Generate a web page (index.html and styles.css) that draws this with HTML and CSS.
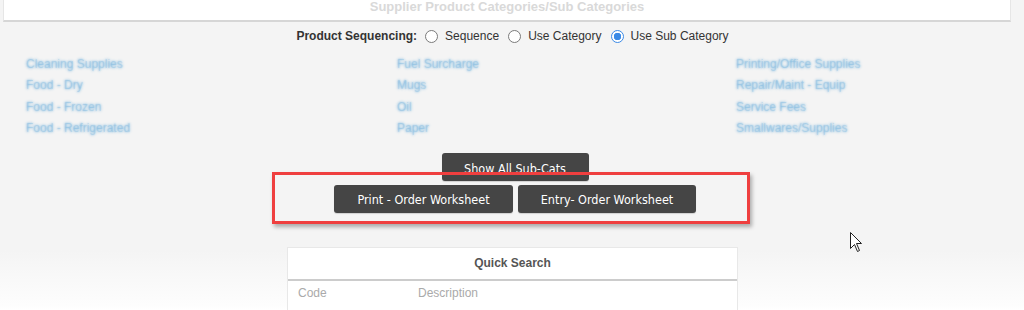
FILE: index.html
```html
<!DOCTYPE html>
<html>
<head>
<meta charset="utf-8">
<link rel="stylesheet" href="styles.css">
</head>
<body>
<div class="page">
  <div class="top-card">
    <div class="top-title">Supplier Product Categories/Sub Categories</div>
  </div>

  <div class="seq-row">
    <span class="seq-label">Product Sequencing:</span>
    <label class="radio"><span class="radio-dot"></span>Sequence</label>
    <label class="radio"><span class="radio-dot"></span>Use Category</label>
    <label class="radio"><span class="radio-dot checked"></span>Use Sub Category</label>
  </div>

  <div class="links">
    <div class="link-col">
      <a class="cat-link">Cleaning Supplies</a>
      <a class="cat-link">Food - Dry</a>
      <a class="cat-link">Food - Frozen</a>
      <a class="cat-link">Food - Refrigerated</a>
    </div>
    <div class="link-col">
      <a class="cat-link">Fuel Surcharge</a>
      <a class="cat-link">Mugs</a>
      <a class="cat-link">Oil</a>
      <a class="cat-link">Paper</a>
    </div>
    <div class="link-col">
      <a class="cat-link">Printing/Office Supplies</a>
      <a class="cat-link">Repair/Maint - Equip</a>
      <a class="cat-link">Service Fees</a>
      <a class="cat-link">Smallwares/Supplies</a>
    </div>
  </div>

  <div class="actions">
    <div class="btn-row">
      <button class="btn btn-show">Show All Sub-Cats</button>
    </div>
    <div class="btn-row btn-row-second">
      <button class="btn btn-print">Print - Order Worksheet</button>
      <button class="btn btn-entry">Entry- Order Worksheet</button>
    </div>
    <div class="highlight"></div>
  </div>

  <div class="quick-card">
    <div class="quick-head">Quick Search</div>
    <div class="quick-cols">
      <span class="col-code">Code</span>
      <span class="col-desc">Description</span>
    </div>
  </div>

  <svg class="cursor" width="13" height="21" viewBox="0 0 13 21">
    <path d="M0.5 0.5 L0.5 16.5 L4.5 12.5 L7.5 19.5 L9.5 18.5 L6.5 11.5 L11.5 11.5 Z" fill="#fff" stroke="#222" stroke-width="1"/>
  </svg>
</div>
</body>
</html>
```

FILE: styles.css
```css
html, body {
  margin: 0;
  padding: 0;
}

body {
  width: 1024px;
  height: 310px;
  overflow: hidden;
  font-family: "Liberation Sans", Arial, sans-serif;
  background: linear-gradient(to bottom, #f4f4f4 0px, #f4f4f4 250px, #fdfdfd 305px, #ffffff 310px);
}

.page {
  position: relative;
  height: 310px;
  overflow: hidden;
}

.top-card {
  margin: 0 13px 0 3px;
  height: 20px;
  background: #ffffff;
  border-left: 1px solid #e6e6e6;
  border-right: 1px solid #e6e6e6;
  border-bottom: 2px solid #d6d6d6;
  box-sizing: content-box;
  overflow: hidden;
}

.top-title {
  text-align: center;
  font-size: 13px;
  font-weight: bold;
  line-height: 16px;
  margin-top: -1px;
  color: #d9d9d9;
}

.seq-row {
  display: flex;
  justify-content: center;
  align-items: center;
  margin-top: 6px;
  height: 16px;
  font-size: 12px;
  color: #333333;
  padding-left: 10px;
}

.seq-label {
  font-weight: bold;
  margin-right: 8px;
}

.radio {
  display: flex;
  align-items: center;
  margin-right: 9px;
}

.radio-dot {
  width: 11px;
  height: 11px;
  border: 1px solid #7a7a7a;
  border-radius: 50%;
  background: #ffffff;
  margin-right: 7px;
  box-sizing: content-box;
}

.radio-dot.checked {
  border-color: #3b8ae6;
  background: radial-gradient(circle, #3b8ae6 0, #3b8ae6 3.5px, #ffffff 4px);
}

.links {
  display: grid;
  grid-template-columns: 371px 339px auto;
  padding-left: 26px;
  margin-top: 10px;
}

.link-col {
  display: flex;
  flex-direction: column;
  align-items: flex-start;
}

.cat-link {
  display: block;
  font-size: 12px;
  line-height: 21.3px;
  color: rgba(110, 175, 220, 0.25);
  text-shadow: 0 0 2.5px rgba(75, 160, 215, 0.85);
}

.actions {
  position: relative;
  margin-top: 14px;
}

.btn-row {
  display: flex;
  justify-content: center;
  gap: 5px;
  padding-left: 6px;
}

.btn-row-second {
  margin-top: 4px;
}

.btn {
  height: 28px;
  border: none;
  border-radius: 3px;
  background: #454545;
  color: #ffffff;
  font-family: "DejaVu Sans Condensed", "DejaVu Sans", sans-serif;
  font-stretch: condensed;
  font-size: 12.5px;
  padding: 0;
  box-shadow: 0 1px 1px rgba(0, 0, 0, 0.15);
}

.btn-show {
  width: 147px;
  padding-top: 3px;
}

.btn-print {
  width: 179px;
}

.btn-entry {
  width: 178px;
}

.highlight {
  position: absolute;
  left: 272px;
  top: 19px;
  width: 478px;
  height: 52px;
  border: 3px solid #ef3f3f;
  box-sizing: border-box;
  box-shadow: 2px 3px 4px rgba(0, 0, 0, 0.3);
}

.quick-card {
  margin: 34px 0 0 287px;
  width: 451px;
  height: 63px;
  background: #ffffff;
  border: 1px solid #e8e8e8;
  border-bottom: none;
  box-sizing: border-box;
}

.quick-head {
  height: 31px;
  line-height: 31px;
  text-align: center;
  font-size: 12px;
  font-weight: bold;
  color: #555555;
  border-bottom: 2px solid #cccccc;
}

.quick-cols {
  display: flex;
  font-size: 12px;
  color: #aaaaaa;
  padding: 5px 0 0 10px;
}

.col-code {
  width: 120px;
}

.cursor {
  position: absolute;
  left: 850px;
  top: 232px;
}
```
